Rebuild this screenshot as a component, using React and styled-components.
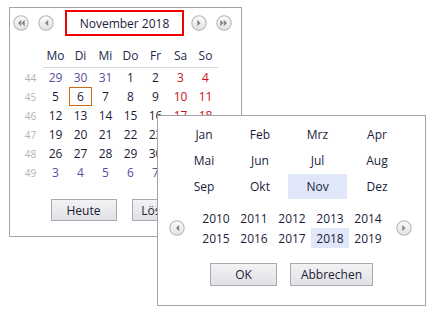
import styled, { createGlobalStyle } from "styled-components";

const GlobalStyle = createGlobalStyle`
  html, body {
    margin: 0;
    padding: 0;
    background: #ffffff;
    font-family: "Open Sans", "Liberation Sans", sans-serif;
    font-size: 12px;
    color: #1c1c3a;
  }
`;

const weeks = [
  { no: 44, days: [[29, "o"], [30, "o"], [31, "o"], [1], [2], [3, "w"], [4, "w"]] },
  { no: 45, days: [[5], [6, "t"], [7], [8], [9], [10, "w"], [11, "w"]] },
  { no: 46, days: [[12], [13], [14], [15], [16], [17, "w"], [18, "w"]] },
  { no: 47, days: [[19], [20], [21], [22], [23], [24, "w"], [25, "w"]] },
  { no: 48, days: [[26], [27], [28], [29], [30], [1, "o"], [2, "o"]] },
  { no: 49, days: [[3, "o"], [4, "o"], [5, "o"], [6, "o"], [7, "o"], [8, "o"], [9, "o"]] },
];

const weekdays = ["Mo", "Di", "Mi", "Do", "Fr", "Sa", "So"];
const months = ["Jan", "Feb", "Mrz", "Apr", "Mai", "Jun", "Jul", "Aug", "Sep", "Okt", "Nov", "Dez"];
const years = [2010, 2011, 2012, 2013, 2014, 2015, 2016, 2017, 2018, 2019];

// round grey nav button with one or two little triangles
const NavIcon = ({ dir = "left", double }) => {
  const tri = (x) =>
    dir === "left"
      ? `M${x + 1.7} 4.1 L${x - 1.1} 7 L${x + 1.7} 9.9 Z`
      : `M${x - 1.7} 4.1 L${x + 1.1} 7 L${x - 1.7} 9.9 Z`;
  return (
    <svg width="16" height="16" viewBox="0 0 14 14">
      <defs>
        <linearGradient id={`g-${dir}`} x1="0" y1="0" x2="0" y2="1">
          <stop offset="0" stopColor="#fcfcfc" />
          <stop offset="1" stopColor="#e2e2e5" />
        </linearGradient>
      </defs>
      <circle cx="7" cy="7" r="6.3" fill={`url(#g-${dir})`} stroke="#b4b4b9" strokeWidth="0.9" />
      {double ? (
        <>
          <path d={tri(5.5)} fill="#858590" />
          <path d={tri(8.5)} fill="#858590" />
        </>
      ) : (
        <path d={tri(7.2)} fill="#858590" />
      )}
    </svg>
  );
};

const App = () => {
  return (
    <>
      <GlobalStyle />
      <Stage>
        <Calendar>
          <Header>
            <NavButton><NavIcon dir="left" double /></NavButton>
            <NavButton><NavIcon dir="left" /></NavButton>
            <Title>November 2018</Title>
            <NavButton><NavIcon dir="right" /></NavButton>
            <NavButton><NavIcon dir="right" double /></NavButton>
          </Header>
          <DayGrid>
            <WeekHead />
            {weekdays.map((d) => (
              <DayName key={d}>{d}</DayName>
            ))}
            {weeks.map((w) => (
              <Week key={w.no}>
                <WeekNo>{w.no}</WeekNo>
                {w.days.map(([n, kind], i) => (
                  <Day key={i} $kind={kind}>
                    {kind === "t" ? <Today>{n}</Today> : n}
                  </Day>
                ))}
              </Week>
            ))}
          </DayGrid>
          <Footer>
            <Button $w={66}>Heute</Button>
            <Button $w={66}>Löschen</Button>
          </Footer>
        </Calendar>

        <Picker>
          <MonthGrid>
            {months.map((m) => (
              <MonthCell key={m} $active={m === "Nov"}>{m}</MonthCell>
            ))}
          </MonthGrid>
          <YearRow>
            <NavButton><NavIcon dir="left" /></NavButton>
            <YearGrid>
              {years.map((y) => (
                <YearCell key={y} $active={y === 2018}>{y}</YearCell>
              ))}
            </YearGrid>
            <NavButton><NavIcon dir="right" /></NavButton>
          </YearRow>
          <PickerFooter>
            <Button $w={67} $h={23}>OK</Button>
            <Button $w={83} $h={23}>Abbrechen</Button>
          </PickerFooter>
        </Picker>
      </Stage>
    </>
  );
};

const Stage = styled.div`
  position: relative;
  width: 435px;
  height: 315px;
  padding: 7px 0 0 9px;
  box-sizing: border-box;
`;

const Calendar = styled.div`
  width: 233px;
  height: 230px;
  box-sizing: border-box;
  border: 1px solid #a3a3ab;
  background: #ffffff;
`;

const Header = styled.div`
  display: flex;
  align-items: center;
  height: 26px;
  margin-top: 2px;
  padding-left: 3px;
`;

const NavButton = styled.span`
  display: flex;
  width: 16px;
  height: 16px;
  margin-right: 9px;
  &:nth-child(3) { margin-right: 0; }
`;

const Title = styled.div`
  width: 122px;
  height: 26px;
  box-sizing: border-box;
  margin: 0 7px 0 2px;
  border: 2px solid #ee0000;
  display: flex;
  align-items: center;
  justify-content: center;
  color: #1c1c3a;
`;

const DayGrid = styled.div`
  display: grid;
  grid-template-columns: 25px repeat(7, 25px);
  margin: 9px 0 0 8px;
`;

const WeekHead = styled.div`
  height: 20px;
`;

const DayName = styled.div`
  height: 20px;
  padding-bottom: 2px;
  border-bottom: 1px solid #d6d6da;
  display: flex;
  align-items: center;
  justify-content: center;
  color: #1c2a48;
`;

const Week = styled.div`
  display: contents;
`;

const WeekNo = styled.div`
  height: 19px;
  display: flex;
  align-items: center;
  justify-content: center;
  font-size: 10px;
  color: #b4b4b8;
`;

const dayColor = { o: "#5a4c9e", w: "#cc1010", t: "#1c1c3a" };

const Day = styled.div`
  height: 19px;
  display: flex;
  align-items: center;
  justify-content: center;
  color: ${({ $kind }) => dayColor[$kind] || "#1c1c3a"};
`;

const Today = styled.span`
  width: 23px;
  height: 19px;
  box-sizing: border-box;
  border: 1px solid #d06a12;
  display: flex;
  align-items: center;
  justify-content: center;
`;

const Footer = styled.div`
  display: flex;
  justify-content: center;
  gap: 15px;
  margin-top: 17px;
  padding-right: 3px;
`;

const Button = styled.div`
  width: ${({ $w }) => $w}px;
  height: ${({ $h }) => $h || 22}px;
  box-sizing: border-box;
  border: 1px solid #a9a9b1;
  background: linear-gradient(#f3f3f5, #e1e1e5);
  display: flex;
  align-items: center;
  justify-content: center;
  color: #1c1c3a;
`;

const Picker = styled.div`
  position: absolute;
  left: 157px;
  top: 115px;
  width: 269px;
  height: 191px;
  box-sizing: border-box;
  border: 1px solid #a3a3ab;
  background: #ffffff;
  padding-top: 6px;
`;

const MonthGrid = styled.div`
  display: grid;
  grid-template-columns: 56px 56px 59px 60px;
  grid-auto-rows: 26px;
  margin-left: 18px;
`;

const MonthCell = styled.div`
  display: flex;
  align-items: center;
  justify-content: center;
  margin-bottom: 1px;
  background: ${({ $active }) => ($active ? "#dfe7f8" : "transparent")};
`;

const YearRow = styled.div`
  display: flex;
  align-items: center;
  margin-top: 8px;
  padding-left: 11px;
  & > span:last-child { margin: 0 0 0 9px; }
  & > span:first-child { margin-right: 12px; }
`;

const YearGrid = styled.div`
  display: grid;
  grid-template-columns: repeat(5, 38px);
  grid-auto-rows: 20px;
`;

const YearCell = styled.div`
  display: flex;
  align-items: center;
  justify-content: center;
  background: ${({ $active }) => ($active ? "#dfe7f8" : "transparent")};
`;

const PickerFooter = styled.div`
  display: flex;
  justify-content: center;
  gap: 13px;
  margin-top: 15px;
`;

export default App;
